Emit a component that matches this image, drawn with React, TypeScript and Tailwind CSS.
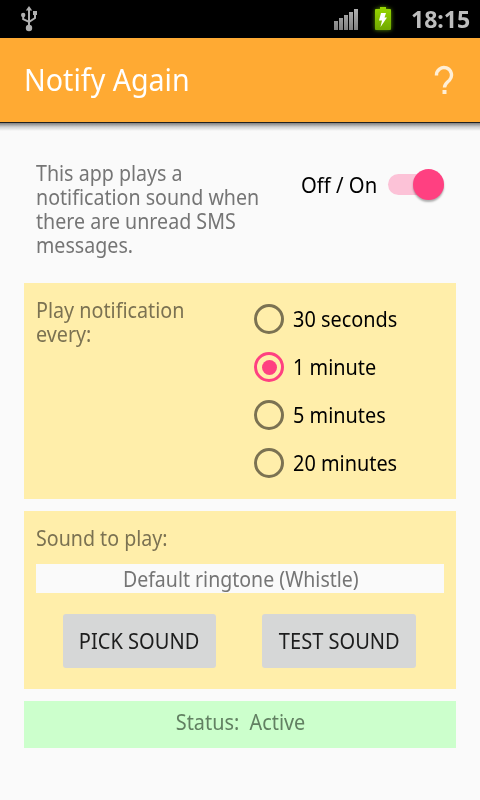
import { useState, type ReactNode } from "react";
import { clsx } from "clsx";

const intervals = ["30 seconds", "1 minute", "5 minutes", "20 minutes"];

function Condensed({ children, className }: { children: ReactNode; className?: string }) {
  return (
    <span className={clsx("inline-block whitespace-pre", className ?? "origin-left scale-x-[0.935]")}>
      {children}
    </span>
  );
}

function UsbIcon() {
  return (
    <svg width="18" height="26" viewBox="0 0 18 26" fill="none" stroke="#b0b0b0" strokeWidth="2">
      <path d="M9 3v18M3.2 9v4.2l5.8 2.6M15 7v5L9 16" />
      <path d="M9 0l3.200 4.500H5.800z" fill="#b0b0b0" stroke="none" />
      <circle cx="3.2" cy="9" r="2.2" fill="#b0b0b0" stroke="none" />
      <path d="M13 5h4v4h-4z" fill="#b0b0b0" stroke="none" />
      <circle cx="9" cy="22" r="3.2" fill="#b0b0b0" stroke="none" />
    </svg>
  );
}

function SignalIcon() {
  return (
    <svg width="24" height="21" viewBox="0 0 24 21">
      <defs>
        <linearGradient id="bars" x1="0" y1="0" x2="0" y2="21" gradientUnits="userSpaceOnUse">
          <stop stopColor="#b0b0b0" />
          <stop offset="1" stopColor="#808080" />
        </linearGradient>
      </defs>
      <path
        d="M0 12h4v9H0zM5 9h4v12H5zM10 6h4v15h-4zM15 3h4v18h-4zM20 0h4v21h-4z"
        fill="url(#bars)"
      />
    </svg>
  );
}

function BatteryIcon() {
  return (
    <svg width="16" height="23" viewBox="0 0 16 23" className="drop-shadow-[0_0_2px_#5c9400]">
      <defs>
        <linearGradient id="charge" x1="0" y1="0" x2="0" y2="1">
          <stop stopColor="#98d800" />
          <stop offset="1" stopColor="#70a800" />
        </linearGradient>
      </defs>
      <path d="M5 0h6v2h4q1 0 1 1v19q0 1-1 1H1q-1 0-1-1V3q0-1 1-1h4z" fill="url(#charge)" />
      <path d="M6 6h5L9.500 10.500H12L5.500 20L7 13.500H4z" fill="#fff" />
    </svg>
  );
}

export default function App() {
  const [enabled, setEnabled] = useState(true);
  const [selected, setSelected] = useState("1 minute");

  return (
    <div className="flex h-[800px] w-[480px] flex-col overflow-hidden bg-[#fafafa] font-['Noto_Sans','Open_Sans',sans-serif] text-[21px] leading-6 text-[#757575]">
      <div className="flex h-[38px] shrink-0 bg-black">
        <div className="pt-[6px] pl-5">
          <UsbIcon />
        </div>
        <div className="ml-auto pt-[9px]">
          <SignalIcon />
        </div>
        <div className="ml-[17px] pt-[7px]">
          <BatteryIcon />
        </div>
        <div className="ml-5 w-[69px] pt-[6px] text-2xl leading-[26px] font-bold text-[#bebebe]">
          <Condensed className="origin-left scale-x-[0.96]">18:15</Condensed>
        </div>
      </div>

      <header className="flex h-[84px] shrink-0 items-center justify-between bg-[#ffaa33] pr-[26px] pl-6 text-white">
        <h1 className="text-[30px] leading-9">
          <Condensed className="origin-left scale-x-[0.954]">Notify Again</Condensed>
        </h1>
        <button aria-label="Help">
          <svg width="20" height="30" viewBox="0 0 20 30" fill="none" stroke="#ffefd6" strokeWidth="3.4">
            <path d="M2.500 10.500a7.500 7.500 0 1 1 13 4.600c-2.600 2.600-5 3.600-5 7.400" />
            <path d="M10.500 25v4" strokeWidth="4" />
          </svg>
        </button>
      </header>
      <div className="h-px shrink-0 bg-[#202020]" />
      <div className="h-2 shrink-0 bg-linear-to-b from-[#808080] via-[#d2d2d2] to-[#fafafa]" />

      <main className="flex flex-col gap-3 px-6 pt-[18px]">
        <section className="flex h-[122px] justify-between px-3 pt-3">
          <p className="w-[250px]">
            <Condensed>
              This app plays a<br />
              notification sound when<br />
              there are unread SMS<br />
              messages.
            </Condensed>
          </p>
          <div className="flex h-[47px] items-center text-black">
            <span className="w-[87px]">
              <Condensed className="origin-left scale-x-[0.965]">Off / On</Condensed>
            </span>
            <button
              role="switch"
              aria-checked={enabled}
              aria-label="Off / On"
              onClick={() => setEnabled(!enabled)}
              className={clsx(
                "flex h-[21px] w-14 items-center rounded-full",
                enabled ? "justify-end bg-[#fcc2d7]" : "justify-start bg-[#b2b2b2]"
              )}
            >
              <span
                className={clsx(
                  "size-[31px] rounded-full shadow-[0_2px_2px_rgba(0,0,0,0.3)]",
                  enabled ? "bg-[#ff4081]" : "bg-[#f1f1f1]"
                )}
              />
            </button>
          </div>
        </section>

        <section className="flex h-[216px] bg-[#ffeeaa] px-3 pt-3">
          <p className="w-[218px] pt-[3px] text-[#7b7252]">
            <Condensed className="origin-left scale-x-[0.94]">
              Play notification<br />
              every:
            </Condensed>
          </p>
          <div role="radiogroup" className="flex flex-col">
            {intervals.map((label) => (
              <button
                key={label}
                role="radio"
                aria-checked={selected === label}
                onClick={() => setSelected(label)}
                className="flex h-12 items-center gap-[9px] text-black"
              >
                <span
                  className={clsx(
                    "flex size-[30px] items-center justify-center rounded-full border-3",
                    selected === label ? "border-[#ff4081]" : "border-[#7b7252]"
                  )}
                >
                  {selected === label && <span className="size-[15px] rounded-full bg-[#ff4081]" />}
                </span>
                <Condensed className="origin-left scale-x-[0.947]">{label}</Condensed>
              </button>
            ))}
          </div>
        </section>

        <section className="flex h-[178px] flex-col bg-[#ffeeaa] px-3 pt-[15px] text-[#7b7252]">
          <p>
            <Condensed>Sound to play:</Condensed>
          </p>
          <div className="mt-[14px] h-[29px] bg-[#fafafa] pt-[3px] pl-[2px] text-center text-[#757575]">
            <Condensed className="scale-x-[0.93]">Default ringtone (Whistle)</Condensed>
          </div>
          <div className="mt-[21px] flex gap-[46px] pl-[27px] text-[#1d1d1d]">
            <button className="flex h-[54px] w-[153px] items-center justify-center rounded-[3px] bg-[#d6d7d7]">
              <Condensed className="scale-x-[0.955]">PICK SOUND</Condensed>
            </button>
            <button className="flex h-[54px] w-[154px] items-center justify-center rounded-[3px] bg-[#d6d7d7]">
              <Condensed className="scale-x-[0.955]">TEST SOUND</Condensed>
            </button>
          </div>
        </section>

        <section className="h-[47px] bg-[#ccffcc] pt-[9px] pl-[2px] text-center text-[#628062]">
          <Condensed className="scale-x-[0.945]">{"Status:  Active"}</Condensed>
        </section>
      </main>
    </div>
  );
}
